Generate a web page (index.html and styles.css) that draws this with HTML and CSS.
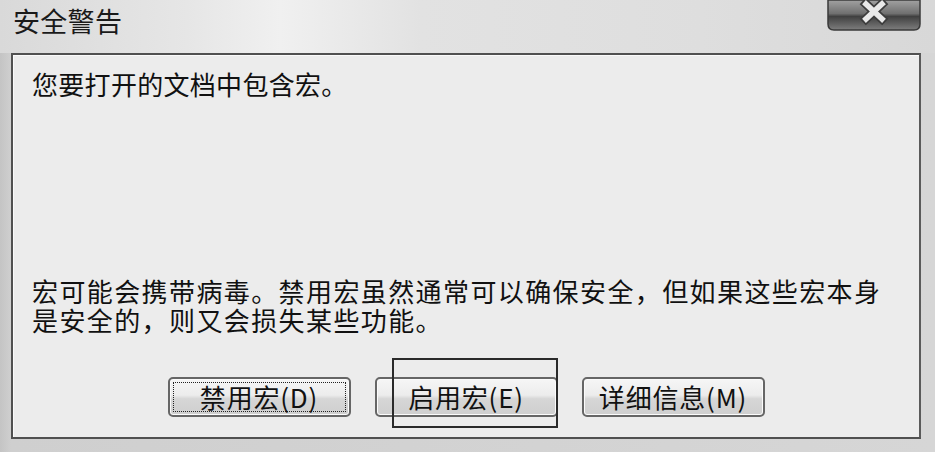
FILE: index.html
```html
<!DOCTYPE html>
<html lang="zh-CN">
<head>
    <meta charset="UTF-8">
    <meta name="viewport" content="width=device-width, initial-scale=1.0">
    <title>安全警告</title>
    <link rel="stylesheet" href="styles.css">
</head>
<body>
    <div class="window">
        <header class="titlebar">
            <span class="title">安全警告</span>
            <button class="close" aria-label="关闭">
                <svg width="94" height="31" viewBox="0 0 94 31">
                    <defs>
                        <linearGradient id="closeGrad" x1="0" y1="0" x2="0" y2="1">
                            <stop offset="0" stop-color="#a2a2a2"/>
                            <stop offset="0.45" stop-color="#707070"/>
                            <stop offset="0.55" stop-color="#404040"/>
                            <stop offset="1" stop-color="#7e7e7e"/>
                        </linearGradient>
                    </defs>
                    <path d="M1 0 H93 V24 Q93 30 87 30 H7 Q1 30 1 24 Z" fill="url(#closeGrad)" stroke="#3a3a3a" stroke-width="1.5"/>
                    <path d="M39 4 L55 19 M55 4 L39 19" stroke="#3c3c3c" stroke-width="9" stroke-linecap="square"/>
                    <path d="M39 4 L55 19 M55 4 L39 19" stroke="#e8e8e8" stroke-width="5.5" stroke-linecap="square"/>
                </svg>
            </button>
        </header>
        <div class="frame">
            <section class="panel">
                <p class="lead">您要打开的文档中包含宏。</p>
                <p class="note">宏可能会携带病毒。禁用宏虽然通常可以确保安全，但如果这些宏本身<br>是安全的，则又会损失某些功能。</p>
                <div class="actions">
                    <button class="btn focused"><span>禁用宏(D)</span></button>
                    <button class="btn">启用宏(E)</button>
                    <button class="btn">详细信息(M)</button>
                    <div class="mark"></div>
                </div>
            </section>
        </div>
    </div>
</body>
</html>
```

FILE: styles.css
```css
body {
    margin: 0;
    padding: 0;
    background: #d4d4d4;
    font-family: "Noto Sans CJK SC", "DejaVu Sans", sans-serif;
    color: #111;
}
.window {
    width: 935px;
    height: 452px;
    overflow: hidden;
    background: linear-gradient(90deg, #c4c4c4 0, #cfcfcf 11px, #d6d6d6 100%);
}
.titlebar {
    height: 53px;
    display: flex;
    justify-content: space-between;
    align-items: flex-start;
    background: linear-gradient(90deg, #d9d9d9 0%, #e6e6e6 20%, #f0f0f0 30%, #e2e2e2 45%, #dedede 75%, #d8d8d8 100%);
}
.title {
    font-size: 27px;
    line-height: 30px;
    padding: 6px 0 0 13px;
    letter-spacing: 0.3px;
    color: #1a1a1a;
}
.close {
    margin: 0 14px 0 0;
    padding: 0;
    border: none;
    background: none;
    width: 94px;
    height: 31px;
    display: block;
}
.close svg { display: block; }
.frame {
    padding: 0 14px 13px 11px;
}
.panel {
    position: relative;
    height: 382px;
    border: 2px solid #505050;
    border-right-color: #5a5a5a;
    background: #ececec;
    display: flex;
    flex-direction: column;
    padding: 0 19px 0 19px;
    box-shadow: inset 1px 1px 0 #fafafa;
}
.lead {
    margin: 14px 0 0 0;
    font-size: 26px;
    line-height: 30px;
    letter-spacing: 0.3px;
}
.note {
    margin: auto 0 0 0;
    font-family: "Liberation Sans", "Noto Sans CJK SC", sans-serif;
    font-size: 26px;
    line-height: 29px;
    letter-spacing: 1.4px;
}
.actions {
    display: flex;
    justify-content: center;
    gap: 24px;
    margin: 40px -19px 20px -19px;
}
.btn {
    width: 183px;
    height: 40px;
    font-family: "Noto Sans CJK SC", "DejaVu Sans", sans-serif;
    font-size: 26px;
    letter-spacing: 0.8px;
    color: #111;
    border: 2px solid #666;
    border-radius: 5px;
    background: linear-gradient(180deg, #f6f6f6 0%, #ececec 45%, #d6d6d6 55%, #cfcfcf 100%);
    padding: 0;
    line-height: 34px;
    box-shadow: inset 0 0 0 1px #fbfbfb;
}
.btn.focused span {
    display: block;
    margin: 3px;
    height: 28px;
    line-height: 28px;
    border: 1px dotted #222;
}
.mark {
    position: absolute;
    left: 379px;
    top: 303px;
    width: 162px;
    height: 66px;
    border: 2px solid #2a2a2a;
}
```
